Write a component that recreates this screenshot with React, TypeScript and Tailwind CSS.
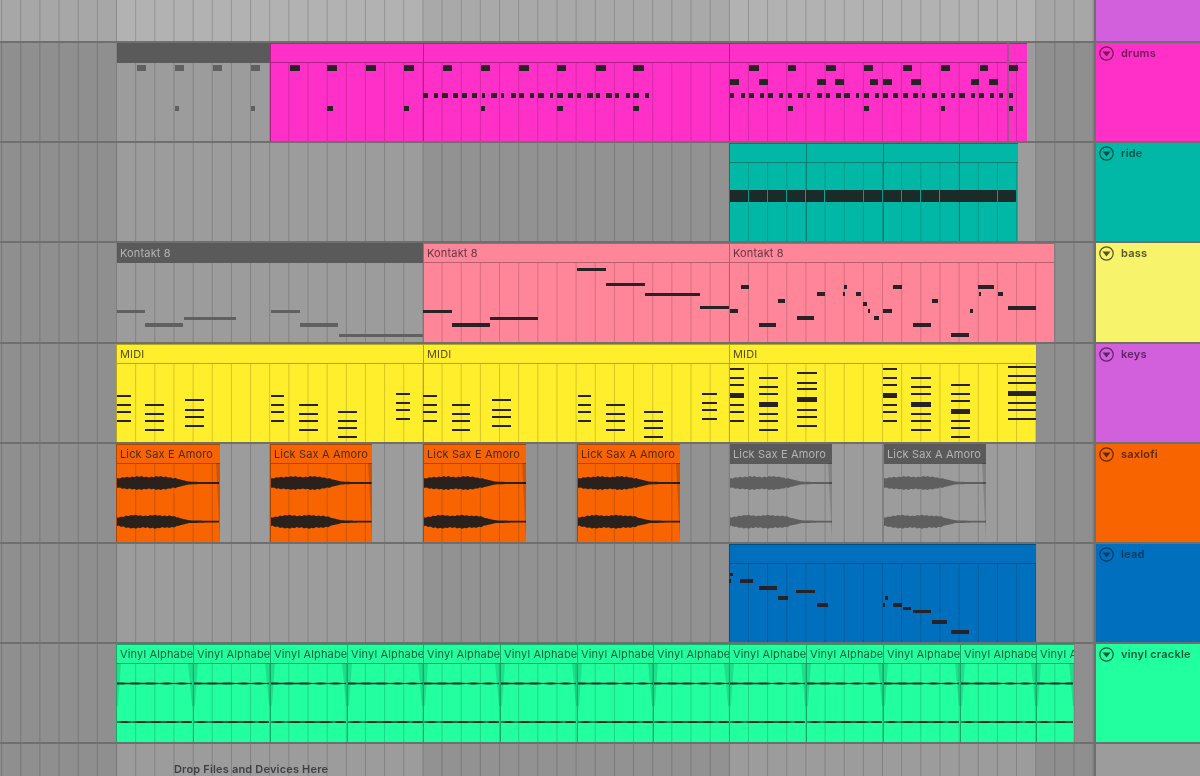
import React from "react";

type Note = [number, number, number, number?]; // x1, x2, centre y (page), height
type ClipData = { x: number; w: number; label?: string; tone: Tone };
type Tone = keyof typeof TONES;

const TONES = {
  pink: { bg: "bg-[#ff30c8]", head: "bg-[#ff30c8]", text: "text-[#7a1560]", edge: "border-[#b0208a]", headEdge: "border-[#b0208a]", ink: "#261a24" },
  teal: { bg: "bg-[#00b8a5]", head: "bg-[#00b8a5]", text: "text-[#00544b]", edge: "border-[#007d70]", headEdge: "border-[#007d70]", ink: "#1b2b29" },
  rose: { bg: "bg-[#ff8599]", head: "bg-[#ff8599]", text: "text-[#5e3a42]", edge: "border-[#b85f6e]", headEdge: "border-[#b85f6e]", ink: "#2a2325" },
  yellow: { bg: "bg-[#ffee2c]", head: "bg-[#ffee2c]", text: "text-[#55501a]", edge: "border-[#b3a71f]", headEdge: "border-[#b3a71f]", ink: "#29271a" },
  orange: { bg: "bg-[#f76400]", head: "bg-[#f76400]", text: "text-[#4d2a12]", edge: "border-[#ad4600]", headEdge: "border-[#ad4600]", ink: "#2a211c" },
  blue: { bg: "bg-[#006fbd]", head: "bg-[#006fbd]", text: "text-[#003a63]", edge: "border-[#004f87]", headEdge: "border-[#004f87]", ink: "#1b2025" },
  green: { bg: "bg-[#22ff9f]", head: "bg-[#22ff9f]", text: "text-[#0e5c3c]", edge: "border-[#18a868]", headEdge: "border-[#18a868]", ink: "#1c2b24" },
  gray: { bg: "", head: "bg-[#5a5a5a]", text: "text-[#b4b4b4]", edge: "border-[#808080]", headEdge: "border-[#5a5a5a]", ink: "#5f5f5f" },
};

const FONT = "font-['Inter','Liberation_Sans',sans-serif]";

const shift = (list: Note[], dx: number): Note[] =>
  list.map(([a, b, y, h]) => [a + dx, b + dx, y, h] as Note);

const row = (y: number, h: number, spans: [number, number][]): Note[] =>
  spans.map(([a, b]) => [a, b, y, h] as Note);

const chord = (a: number, b: number, ys: number[], thick?: number): Note[] =>
  ys.map((y) => [a, b, y, y === thick ? 5 : 2.4] as Note);

const drumsGray: Note[] = [
  ...row(67.7, 6, [[137, 146], [175, 183.5], [213, 222], [251, 260]]),
  ...row(108.7, 5, [[175, 178.5], [251, 255]]),
];
const drumsInk: Note[] = [
  ...row(67.7, 6, [
    [290, 300], [327, 337], [366, 376], [404, 414], [443.3, 452.3], [481.3, 490], [519.3, 529], [557.3, 566.3],
    [596, 606], [633.3, 644], [749.3, 758.7], [787.7, 795.7], [826, 836], [863.7, 873.3], [902.7, 912.3],
    [941, 950], [980, 988.3], [1008.7, 1018],
  ]),
  ...row(81.7, 6, [
    [730, 739.3], [759, 767.7], [816.7, 826], [835.3, 844], [869.7, 877.7], [883.3, 891.7], [911.3, 921.3],
    [970.7, 979.3], [988.7, 998],
  ]),
  ...row(95, 5, [
    [423, 428.3], [434.3, 438.3], [442.3, 448], [452.7, 458], [461.7, 467], [471.7, 477.3], [481.7, 485.3],
    [491.3, 497], [500.7, 504.3], [510.7, 516], [518.7, 524], [530.3, 534], [538, 543.7], [549.7, 553.3],
    [557.3, 563], [567.7, 573], [577, 581], [586.7, 592.7], [596.3, 600], [606.3, 612], [615.3, 619.3],
    [626, 630], [633.3, 639], [645.3, 649], [730, 734.3], [741, 744.7], [748.7, 754], [760.3, 763.7],
    [768.3, 773.3], [778.7, 783.3], [787.7, 792.3], [797.7, 803], [807, 810.3], [817, 822.3], [826.3, 829.7],
    [836.3, 841.3], [844.3, 849.7], [855.7, 859], [863.7, 868.7], [875, 878.7], [883.3, 888.3], [893.3, 898.3],
    [902.7, 907.7], [912.7, 918], [922, 925.3], [932.3, 937.3], [941, 945], [951.3, 955], [959.3, 964.7],
    [970.7, 974.7], [979, 984], [990, 994], [998.7, 1003], [1008.7, 1013.3],
  ]),
  ...row(108.7, 5, [
    [327, 333], [404, 409], [481.3, 485], [557.3, 563], [633.3, 639], [787.7, 792.7], [863.7, 868.7], [941, 945],
    [1008.7, 1013.3],
  ]),
];

const rideInk: Note[] = Array.from({ length: 15 }, (_, i) => {
  const a = 729.5 + i * 19.15;
  return [a, Math.min(a + 18.4, 1017.5), 196, 12] as Note;
});

const bassGray: Note[] = [
  [116.7, 144.7, 311.3, 3.5], [271, 300, 311.3, 3.5], [145.3, 183.3, 325, 3.5], [300.3, 338.3, 325, 3.5],
  [184, 236, 318.3, 3.5], [338.7, 422.7, 335.3, 3.5],
];
const bassInk: Note[] = [
  [423, 452, 311.3, 3.5], [452, 490, 325, 3.5], [490, 538, 318.3, 3.5], [577, 606, 269.7, 3.5], [606, 645, 284.7, 3.5],
  [645, 700, 294.3, 3.5], [700, 729, 307.5, 3.5], [740.7, 749.3, 287.3, 4], [730, 738.3, 311.3, 4], [759, 775.7, 325, 4],
  [778, 784.7, 301.3, 4], [797.3, 814.3, 318.3, 4], [817, 824.7, 294.3, 4], [844, 847.3, 287.3, 4], [842.7, 845, 294.3, 4],
  [855.7, 860.7, 294.3, 4], [863.3, 867, 304.3, 4], [868.3, 870, 311.3, 4], [873.7, 879.3, 318.3, 4], [883.3, 891.7, 311.3, 4],
  [893, 902.3, 287.3, 4], [912.7, 930.7, 325, 4], [932, 938.3, 301.3, 4], [951.3, 969.3, 335.3, 4], [969.7, 973.3, 311.3, 4],
  [978.7, 980.7, 294.3, 4], [978.3, 994.3, 287.3, 4], [998.3, 1003.3, 294.3, 4], [1008, 1036, 307.7, 4],
];

const keysBase: Note[] = [
  ...chord(116.7, 131, [396, 405, 412.3, 421]),
  ...chord(145.3, 164, [405, 414.3, 421, 430.3]),
  ...chord(185, 204.3, [400.3, 409.7, 416.7, 425.7]),
  ...chord(271, 284, [396, 405, 412.3, 421]),
  ...chord(299, 318, [405, 414.3, 421, 430.3]),
  ...chord(337.7, 356.7, [412, 421, 428, 437]),
  ...chord(395.7, 410.3, [394, 403, 410, 418.7]),
];
const keysInk: Note[] = [
  ...keysBase,
  ...shift(keysBase, 306.5),
  ...chord(730, 743.7, [368.7, 378, 385, 395, 405, 412.3, 421], 395),
  ...chord(759, 777.7, [378, 387, 394, 404, 414.3, 421, 430.3], 404),
  ...chord(797.3, 816.7, [373.3, 382.7, 389.3, 399.7, 410, 416.7, 425.7], 399.7),
  ...chord(883.3, 897.3, [368.7, 378, 385, 395, 405, 412.3, 421], 395),
  ...chord(911.3, 930.7, [378, 387, 394, 404, 414.3, 421, 430.3], 404),
  ...chord(951.3, 970, [385, 394, 400.7, 411, 421, 428, 437], 411),
  ...chord(1008, 1036, [366.7, 375.7, 382.7, 393, 403, 410, 419], 393),
];

const leadInk: Note[] = [
  [730, 733.3, 574.3, 3.5], [729, 731, 581, 3.5], [740, 753, 581, 3.5], [759, 776.7, 588, 3.5], [778, 788.3, 598, 3.5],
  [796.3, 815.3, 591.3, 3.5], [817, 827.7, 605, 3.5], [884.7, 888.3, 598, 3.5], [883, 885, 605, 3.5], [893, 902.3, 605, 3.5],
  [902.7, 911, 608.3, 3.5], [912.7, 930.7, 611.7, 3.5], [932.3, 946.7, 622, 3.5], [950.7, 969, 632, 3.5],
];

const BEATS =
  "bg-[repeating-linear-gradient(90deg,transparent_0.6px,rgba(0,0,0,0.17)_1.6px,transparent_2.6px,transparent_19.75px)]";

function Bands({ top }: { top?: boolean }) {
  const outer = top ? "bg-[#a7a7a7]" : "bg-[#8f8f8f]";
  const light = top ? "bg-[#b2b2b2]" : "bg-[#9c9c9c]";
  const mid = top ? "bg-[#a9a9a9]" : "bg-[#929292]";
  return (
    <>
      <div className={`w-[116.5px] ${outer}`} />
      <div className={`w-[306.5px] ${light}`} />
      <div className={`w-[306.5px] ${mid}`} />
      <div className={`w-[306.5px] ${light}`} />
      <div className={`flex-1 ${outer}`} />
    </>
  );
}

function Wave({ w, ink }: { w: number; ink: string }) {
  const channel = (cy: number, seed: number) => {
    const up: string[] = [];
    const down: string[] = [];
    for (let x = 0; x <= w; x += 1.5) {
      const t = x / w;
      const env =
        t < 0.1 ? 4 + t * 24 : t < 0.5 ? 6.2 : t < 0.7 ? 6.2 - (t - 0.5) * 24 : t < 0.85 ? 1.4 - (t - 0.7) * 3 : 0.9;
      const jitter = t < 0.6 ? Math.sin(x * 1.3 + seed) * 0.5 + Math.sin(x * 0.31 + seed) * 0.4 : 0;
      up.push(`${x},${(cy - env - jitter).toFixed(1)}`);
      down.unshift(`${x},${(cy + env + jitter).toFixed(1)}`);
    }
    return up.concat(down).join(" ");
  };
  return (
    <svg className="absolute left-0 top-0" width={w} height={98} aria-hidden="true">
      <polygon points={channel(39, 1)} fill={ink} />
      <polygon points={channel(77.7, 2.5)} fill={ink} />
      <polygon points={`${w - 4},19 ${w},19 ${w},96`} fill="rgba(0,0,0,0.16)" />
    </svg>
  );
}

function Crackle({ w, ink }: { w: number; ink: string }) {
  const line = (cy: number, seed: number) => {
    const up: string[] = [];
    const down: string[] = [];
    for (let x = 0; x <= w; x += 3) {
      const j = 0.55 + Math.abs(Math.sin(x * 2.3 + seed)) * 0.4;
      up.push(`${x},${(cy - j).toFixed(1)}`);
      down.unshift(`${x},${(cy + j).toFixed(1)}`);
    }
    return up.concat(down).join(" ");
  };
  return (
    <svg className="absolute left-0 top-0" width={w} height={98} aria-hidden="true">
      <polygon points={`0,19 4,19 1,62 0,62`} fill="rgba(0,0,0,0.12)" />
      <polygon points={`${w - 5},19 ${w},19 ${w},62 ${w - 1},62`} fill="rgba(0,0,0,0.12)" />
      <polygon points={line(39.5, 1)} fill={ink} />
      <polygon points={line(78, 3)} fill={ink} />
    </svg>
  );
}

type RowProps = {
  top: number;
  height: string;
  clips?: ClipData[];
  notes?: Note[];
  grayNotes?: Note[];
  name?: string;
  head: string;
  headText?: string;
  wave?: boolean;
  crackle?: boolean;
  lightBands?: boolean;
  markerAt?: number;
};

function Track({ top, height, clips = [], notes = [], grayNotes = [], name, head, headText, wave, crackle, lightBands, markerAt }: RowProps) {
  const place = (c: ClipData) => {
    const left = Math.floor(c.x);
    return { left, width: Math.round(c.x + c.w) - left };
  };
  return (
    <div className={`flex ${height} shrink-0 border-b-2 border-[#6f6f6f]`}>
      <div className="relative flex w-[1094px] overflow-hidden">
        <Bands top={lightBands} />
        {clips.map((c) =>
          TONES[c.tone].bg ? (
            <div key={c.x} className={`absolute inset-y-0 ${TONES[c.tone].bg}`} style={place(c)} />
          ) : null
        )}
        <div className={`absolute inset-0 ${BEATS}`} />
        {clips.map((c) => {
          const t = TONES[c.tone];
          const p = place(c);
          return (
            <div key={c.x} className={`absolute inset-y-0 border-l ${t.edge}`} style={p}>
              <div
                className={`flex h-[20px] items-center overflow-hidden whitespace-nowrap border-b border-t ${t.headEdge} ${t.head} ${t.text} ${FONT} pl-[3px] text-[11px] leading-none tracking-[0.15px]`}
              >
                {c.label}
              </div>
              {wave && <Wave w={p.width - 1} ink={t.ink} />}
              {crackle && <Crackle w={p.width - 1} ink={t.ink} />}
            </div>
          );
        })}
        {markerAt !== undefined && (
          <div className="absolute inset-y-0 w-[2px] bg-[#a0558f]" style={{ left: markerAt }} />
        )}
        {grayNotes.map(([a, b, y, h = 3], i) => (
          <div
            key={`g${i}`}
            className="absolute bg-[#606060]"
            style={{ left: a, width: b - a, top: y - top - h / 2, height: h }}
          />
        ))}
        {notes.map(([a, b, y, h = 3], i) => (
          <div
            key={`n${i}`}
            className={`absolute ${h === 12 ? "bg-[#1b2b29]" : "bg-[#262226]"}`}
            style={{ left: a, width: b - a, top: y - top - h / 2, height: h }}
          />
        ))}
      </div>
      <div className={`flex flex-1 items-start gap-[7px] border-l-2 border-[#6f6f6f] pl-[3px] pt-[3px] ${head}`}>
        {name && (
          <>
            <svg width="15" height="15" viewBox="0 0 15 15" className={headText} aria-hidden="true">
              <circle cx="7.5" cy="7.5" r="6.7" fill="none" stroke="currentColor" strokeWidth="1.2" />
              <path d="M3.5 5.6h8L7.5 10.4z" fill="currentColor" />
            </svg>
            <span className={`${FONT} text-[11px] font-semibold leading-[15px] tracking-[0.2px] ${headText}`}>{name}</span>
          </>
        )}
      </div>
    </div>
  );
}

const C = (x: number, w: number, tone: Tone, label?: string): ClipData => ({ x, w, tone, label });

const vinylStarts = [116.5, 193, 270, 347, 423, 500, 577, 653, 729, 806, 883, 960];

export default function App() {
  return (
    <div className="relative flex h-[776px] w-[1200px] flex-col overflow-hidden bg-[#8f8f8f] blur-[0.6px]">
      <Track top={0} height="h-[43px]" head="bg-[#d25fdc]" lightBands />
      <Track
        top={43}
        height="h-[100px]"
        name="drums"
        head="bg-[#ff30c8]"
        headText="text-[#6e1a5c]"
        markerAt={1007}
        clips={[C(116.5, 153.5, "gray"), C(270.5, 152.5, "pink"), C(423, 306, "pink"), C(729.5, 277.5, "pink"), C(1007.5, 19.5, "pink")]}
        grayNotes={drumsGray}
        notes={drumsInk}
      />
      <Track
        top={143}
        height="h-[100px]"
        name="ride"
        head="bg-[#00b8a5]"
        headText="text-[#00504a]"
        clips={[C(729.5, 76.5, "teal"), C(806.5, 76.5, "teal"), C(883, 76.5, "teal"), C(959.5, 58, "teal")]}
        notes={rideInk}
      />
      <Track
        top={243}
        height="h-[101px]"
        name="bass"
        head="bg-[#f7f36a]"
        headText="text-[#55532a]"
        clips={[C(116.5, 306.5, "gray", "Kontakt 8"), C(423, 306, "rose", "Kontakt 8"), C(729.5, 324.5, "rose", "Kontakt 8")]}
        grayNotes={bassGray}
        notes={bassInk}
      />
      <Track
        top={344}
        height="h-[100px]"
        name="keys"
        head="bg-[#d25fdc]"
        headText="text-[#5d2563]"
        clips={[C(116.5, 306.5, "yellow", "MIDI"), C(423, 306, "yellow", "MIDI"), C(729.5, 306.5, "yellow", "MIDI")]}
        notes={keysInk}
      />
      <Track
        top={444}
        height="h-[100px]"
        name="saxlofi"
        head="bg-[#f76400]"
        headText="text-[#5c2a08]"
        wave
        clips={[
          C(116.5, 103.5, "orange", "Lick Sax E Amoro"),
          C(270.5, 101.5, "orange", "Lick Sax A Amoro"),
          C(423, 103, "orange", "Lick Sax E Amoro"),
          C(577, 103, "orange", "Lick Sax A Amoro"),
          C(729.5, 102.5, "gray", "Lick Sax E Amoro"),
          C(883.5, 102.5, "gray", "Lick Sax A Amoro"),
        ]}
      />
      <Track
        top={544}
        height="h-[100px]"
        name="lead"
        head="bg-[#006fbd]"
        headText="text-[#003c66]"
        clips={[C(729.5, 306.5, "blue")]}
        notes={leadInk}
      />
      <Track
        top={644}
        height="h-[100px]"
        name="vinyl crackle"
        head="bg-[#22ff9f]"
        headText="text-[#0f5c3d]"
        crackle
        clips={[
          ...vinylStarts.map((x, i) => C(x, (vinylStarts[i + 1] ?? 1036) - x, "green", "Vinyl Alphabet")),
          C(1036, 38, "green", "Vinyl Alphabet"),
        ]}
      />
      <div className="flex flex-1">
        <div className="relative flex w-[1094px] overflow-hidden">
          <Bands />
          <div className={`absolute inset-0 ${BEATS}`} />
          <span className={`absolute left-[174px] top-[19px] whitespace-nowrap ${FONT} text-[11px] font-semibold leading-[13px] tracking-[0.18px] text-[#3f3f46]`}>
            Drop Files and Devices Here
          </span>
        </div>
        <div className="flex-1 border-l-2 border-[#6f6f6f] bg-[#9c9c9c]" />
      </div>
    </div>
  );
}
